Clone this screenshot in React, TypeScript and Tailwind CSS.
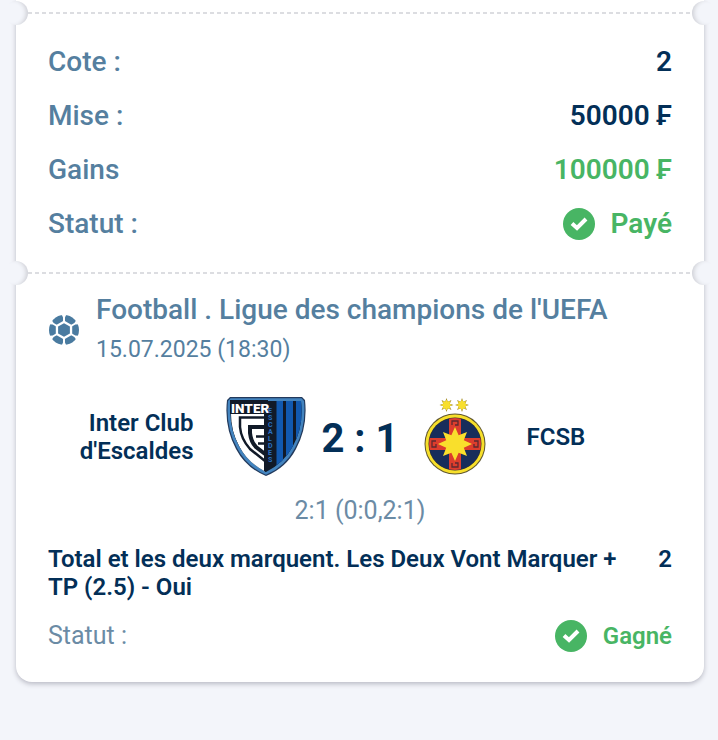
import type { ReactNode } from "react";

const points = (n: number, cx: number, cy: number, outer: number, inner: number) =>
  Array.from({ length: n * 2 }, (_, i) => {
    const r = i % 2 === 0 ? outer : inner;
    const a = (Math.PI * i) / n - Math.PI / 2;
    return `${(cx + r * Math.cos(a)).toFixed(2)},${(cy + r * Math.sin(a)).toFixed(2)}`;
  }).join(" ");

function Check() {
  return (
    <svg viewBox="0 0 32 32" className="size-8 shrink-0" aria-hidden="true">
      <circle cx="16" cy="16" r="16" fill="#48b564" />
      <path d="M9 15.500 L14 20 L23 11" fill="none" stroke="#fff" strokeWidth="4" />
    </svg>
  );
}

function FootballIcon() {
  return (
    <svg viewBox="0 0 32 32" className="size-8 shrink-0" aria-hidden="true">
      <circle cx="16" cy="16" r="15" fill="#4a7ba0" />
      <g fill="#fff">
        {[0, 60, 120, 180, 240, 300].map((deg) => (
          <path key={deg} transform={`rotate(${deg} 16 16)`} d="M13.500 0L15 3.500V8H17V3.500L18.500 0Z" />
        ))}
        <polygon points="16,6.500 24.200,11.200 24.200,20.800 16,25.500 7.800,20.800 7.800,11.200" />
      </g>
      <polygon points="16,9.200 21.900,12.600 21.900,19.400 16,22.800 10.100,19.400 10.100,12.600" fill="#4a7ba0" />
    </svg>
  );
}

function InterCrest() {
  return (
    <svg viewBox="0 0 80 80" className="size-20 shrink-0" role="img" aria-label="Inter Club d'Escaldes">
      <defs>
        <clipPath id="crest">
          <path d="M5 4H75Q78 29 67 49Q58 66 40 75Q22 66 13 49Q2 29 5 4Z" />
        </clipPath>
      </defs>
      <path d="M4 0H76L79 3Q82 30 70 52Q60 71 40 79Q20 71 10 52Q-2 30 1 3Z" fill="#233a5c" />
      <path d="M4.500 1.200H75.500L78 4Q80.500 30 69 51Q59 70 40 77.800Q21 70 11 51Q-0.500 30 2 4Z" fill="#4384bf" />
      <g clipPath="url(#crest)">
        <rect width="80" height="80" fill="#111a28" />
        <rect x="50.500" width="6.500" height="80" fill="#1159b0" />
        <rect x="60" width="7" height="80" fill="#1159b0" />
        <rect x="70" width="8" height="80" fill="#1159b0" />
        <path d="M5 17H39V76Q22 67 13 49Q5 34 5 17Z" fill="#fff" />
        <g fill="none" stroke="#111a28">
          <path d="M39 20.500H14V30Q15 42 24 52L39 64" strokeWidth="2.500" />
          <path d="M39 30H24V36Q25 45 30 50L39 57" strokeWidth="4" />
          <path d="M30 39.500H39M32 46.500H39" strokeWidth="2.500" />
        </g>
        <rect x="38" y="17" width="2" height="60" fill="#111a28" />
      </g>
      <rect x="4" y="3" width="38" height="14" fill="#111a28" />
      <text x="5" y="15.500" fontSize="13.500" fontWeight="900" fill="#fff" fontFamily="Roboto, sans-serif">INTER</text>
      <g fill="#2a70c2" fontSize="7" fontWeight="700" fontFamily="Roboto, sans-serif">
        {"ESCALDES".split("").map((c, i) => (
          <text key={i} x="42" y={16 + i * 7}>{c}</text>
        ))}
      </g>
    </svg>
  );
}

function FcsbCrest() {
  return (
    <svg viewBox="0 0 80 80" className="size-20 shrink-0" role="img" aria-label="FCSB">
      <defs>
        <clipPath id="disc">
          <circle cx="40" cy="48" r="26" />
        </clipPath>
      </defs>
      {[31.5, 47].map((x) => (
        <g key={x}>
          <polygon points={points(8, x, 8, 7, 3.5)} fill="#9c8628" />
          <polygon points={points(8, x, 8, 5.5, 3.5)} fill="#f8df2d" />
        </g>
      ))}
      <circle cx="40" cy="47" r="30.5" fill="#5f5630" />
      <circle cx="40" cy="47" r="29.5" fill="#f7df2b" />
      <circle cx="40" cy="47" r="26.5" fill="#33302e" />
      <g transform="translate(0 -1)">
        <g clipPath="url(#disc)">
          <rect x="10" y="18" width="60" height="60" fill="#172d5b" />
          <path d="M34 18H46V78H34ZM10 42H70V54H10Z" fill="#dc3d2d" />
          <g fill="none" stroke="#5b2931" strokeWidth="1.3">
            <path d="M37 29V25H43V29H40M37 67V71H43V67H40M21 45H17V51H21V48M59 45H63V51H59V48" />
          </g>
        </g>
      </g>
      <polygon points={points(8, 40, 47, 17, 9.5)} fill="#f9df2c" />
    </svg>
  );
}

function Perforation() {
  return (
    <div className="-mx-3 flex h-6 items-center justify-between" aria-hidden="true">
      <span className="size-6 shrink-0 rounded-full bg-[#f3f5fa] shadow-[inset_-4px_0_4px_-2px_#cfd0d6]" />
      <span className="h-0.5 flex-1 bg-[repeating-linear-gradient(90deg,#dcdde1_0px,#dcdde1_4px,transparent_4px,transparent_7px)]" />
      <span className="size-6 shrink-0 rounded-full bg-[#f3f5fa] shadow-[inset_4px_0_4px_-2px_#cfd0d6]" />
    </div>
  );
}

function Row({ label, children, tone }: { label: string; children: ReactNode; tone: string }) {
  return (
    <div className="flex h-[54px] items-center justify-between">
      <dt className="font-medium text-[#557f9f]">{label}</dt>
      <dd className={`flex items-center gap-4 font-semibold ${tone}`}>{children}</dd>
    </div>
  );
}

export default function App() {
  return (
    <div className="min-h-screen overflow-hidden bg-[#f3f5fa] pr-3.5 pb-14 pl-4 font-[Roboto,sans-serif] text-[#032f57]">
      <main className="rounded-b-2xl bg-white pt-px shadow-[0_2px_5px_#b9bac4]">
        <Perforation />
        <dl className="px-8 py-[10px] text-[28px]">
          <Row label="Cote :" tone="text-[#032f57]">2</Row>
          <Row label="Mise :" tone="text-[#032f57]">50000 ₣</Row>
          <Row label="Gains" tone="text-[#48b564]">100000 ₣</Row>
          <Row label="Statut :" tone="text-[#48b564]"><Check />Payé</Row>
        </dl>
        <Perforation />
        <section className="px-8 pt-[5px] pb-[30px]">
          <header className="flex items-center gap-4 text-[#557f9f]">
            <FootballIcon />
            <div>
              <h2 className="text-[28px] leading-10 font-medium">Football . Ligue des champions de l'UEFA</h2>
              <p className="text-[23px] leading-10">15.07.2025 (18:30)</p>
            </div>
          </header>
          <div className="mt-[27px] flex items-center text-2xl leading-7 font-semibold">
            <p className="flex-1 pr-8 text-right">Inter Club<br />d'Escaldes</p>
            <InterCrest />
            <strong className="w-[109px] pt-1 text-center text-[40px] leading-10 font-bold">2 : 1</strong>
            <FcsbCrest />
            <p className="flex-1 pl-8">FCSB</p>
          </div>
          <p className="mt-5 text-center text-[25px] leading-7 text-[#6b8ba5]">2:1 (0:0,2:1)</p>
          <div className="mt-5 flex justify-between gap-8 text-2xl leading-7 font-semibold">
            <p>Total et les deux marquent. Les Deux Vont Marquer + TP (2.5) - Oui</p>
            <span>2</span>
          </div>
          <div className="mt-[18px] flex items-center justify-between text-2xl">
            <span className="text-[25px] text-[#6b8ba5]">Statut :</span>
            <span className="flex items-center gap-4 font-semibold text-[#48b564]"><Check />Gagné</span>
          </div>
        </section>
      </main>
    </div>
  );
}
